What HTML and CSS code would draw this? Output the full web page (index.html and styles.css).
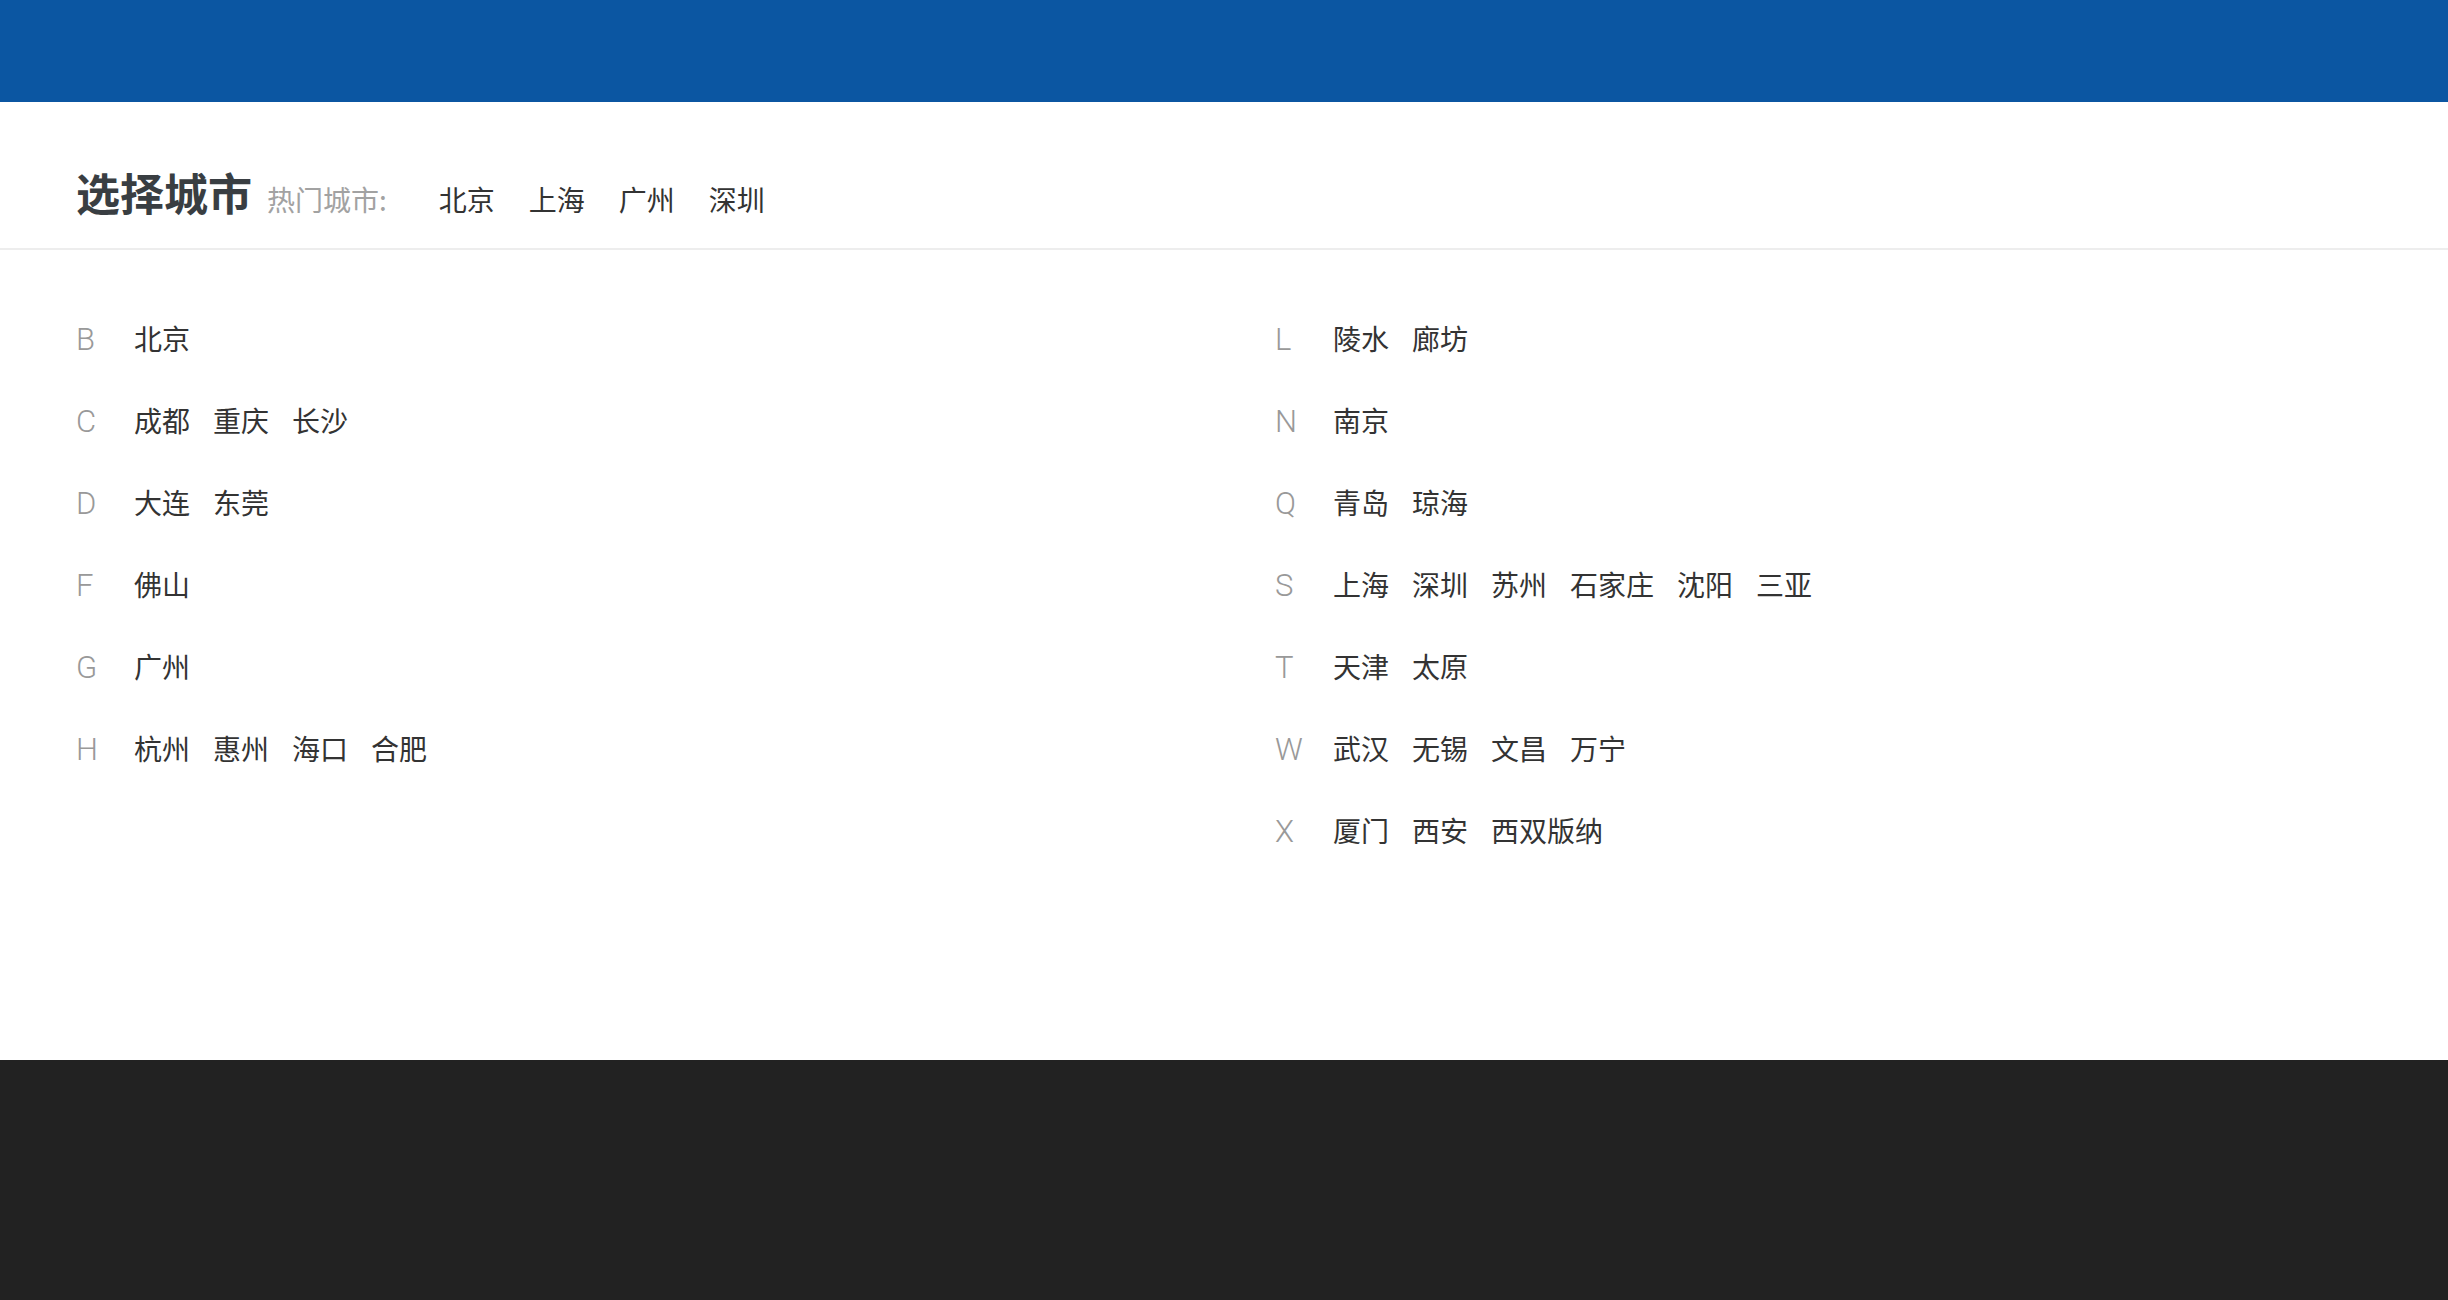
FILE: index.html
```html
<!DOCTYPE html>
<html lang="zh-CN">
<head>
<meta charset="utf-8">
<title>选择城市</title>
<link rel="stylesheet" href="styles.css">
</head>
<body>
<div class="page">
  <header class="topbar"></header>
  <main class="main">
    <div class="titlebar">
      <h1 class="title">选择城市</h1>
      <span class="hot-label">热门城市:</span>
      <ul class="hot-list">
        <li>北京</li>
        <li>上海</li>
        <li>广州</li>
        <li>深圳</li>
      </ul>
    </div>
    <div class="lists">
      <div class="col">
        <div class="row"><span class="letter">B</span><ul class="cities"><li>北京</li></ul></div>
        <div class="row"><span class="letter">C</span><ul class="cities"><li>成都</li><li>重庆</li><li>长沙</li></ul></div>
        <div class="row"><span class="letter">D</span><ul class="cities"><li>大连</li><li>东莞</li></ul></div>
        <div class="row"><span class="letter">F</span><ul class="cities"><li>佛山</li></ul></div>
        <div class="row"><span class="letter">G</span><ul class="cities"><li>广州</li></ul></div>
        <div class="row"><span class="letter">H</span><ul class="cities"><li>杭州</li><li>惠州</li><li>海口</li><li>合肥</li></ul></div>
      </div>
      <div class="col">
        <div class="row"><span class="letter">L</span><ul class="cities"><li>陵水</li><li>廊坊</li></ul></div>
        <div class="row"><span class="letter">N</span><ul class="cities"><li>南京</li></ul></div>
        <div class="row"><span class="letter">Q</span><ul class="cities"><li>青岛</li><li>琼海</li></ul></div>
        <div class="row"><span class="letter">S</span><ul class="cities"><li>上海</li><li>深圳</li><li>苏州</li><li>石家庄</li><li>沈阳</li><li>三亚</li></ul></div>
        <div class="row"><span class="letter">T</span><ul class="cities"><li>天津</li><li>太原</li></ul></div>
        <div class="row"><span class="letter">W</span><ul class="cities"><li>武汉</li><li>无锡</li><li>文昌</li><li>万宁</li></ul></div>
        <div class="row"><span class="letter">X</span><ul class="cities"><li>厦门</li><li>西安</li><li>西双版纳</li></ul></div>
      </div>
    </div>
  </main>
  <footer class="footer"></footer>
</div>
</body>
</html>
```
FILE: styles.css
```css
* {
  box-sizing: border-box;
}

html, body {
  margin: 0;
  padding: 0;
}

body {
  font-family: "Noto Sans CJK SC", "Noto Sans", sans-serif;
  color: #333;
  background: #fff;
}

.page {
  display: flex;
  flex-direction: column;
  min-height: 1300px;
}

.topbar {
  height: 102px;
  background: #0b56a2;
  flex: none;
}

.main {
  flex: 1;
  background: #fff;
}

.titlebar {
  height: 148px;
  padding: 68px 76px 0;
  border-bottom: 2px solid #ededed;
  display: flex;
  align-items: baseline;
}

.title {
  margin: 0;
  font-size: 44px;
  line-height: 44px;
  font-weight: 700;
  color: #393e42;
}

.hot-label {
  margin-left: 15px;
  font-size: 28px;
  line-height: 28px;
  color: #a2a2a2;
  font-weight: 400;
}

.hot-list {
  list-style: none;
  margin: 0 0 0 52px;
  padding: 0;
  display: flex;
  gap: 34px;
  font-size: 28px;
  line-height: 28px;
  color: #333;
}

.lists {
  display: grid;
  grid-template-columns: 1199px 1fr;
  padding: 47px 76px 0;
}

.row {
  display: flex;
  align-items: baseline;
  height: 82px;
  line-height: 82px;
}

.letter {
  width: 58px;
  flex: none;
  font-family: Roboto, "Liberation Sans", sans-serif;
  font-weight: 300;
  font-size: 31px;
  color: #999;
}

.cities {
  list-style: none;
  margin: 0;
  padding: 0;
  display: flex;
  gap: 23px;
  font-size: 28px;
  color: #333;
}

.footer {
  height: 240px;
  background: #222;
  flex: none;
}
```
